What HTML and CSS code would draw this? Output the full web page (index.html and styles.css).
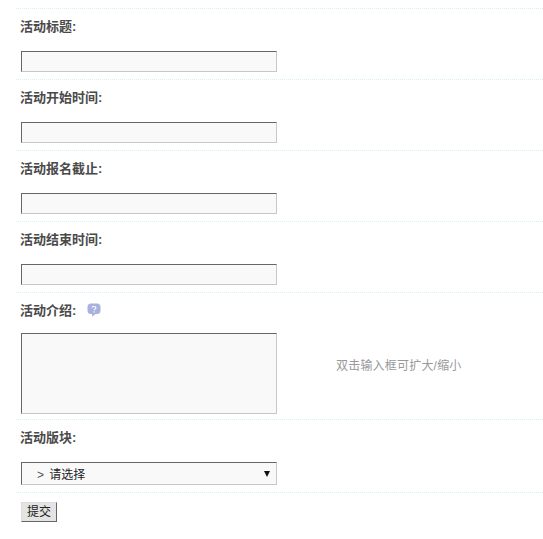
FILE: index.html
```html
<!DOCTYPE html>
<html lang="zh-CN">
<head>
<meta charset="utf-8">
<title>活动</title>
<link rel="stylesheet" href="styles.css">
</head>
<body>
<form class="form">
  <div class="row">
    <label class="label">活动标题:</label>
    <input class="field" type="text">
  </div>
  <div class="row">
    <label class="label">活动开始时间:</label>
    <input class="field" type="text">
  </div>
  <div class="row">
    <label class="label">活动报名截止:</label>
    <input class="field" type="text">
  </div>
  <div class="row">
    <label class="label">活动结束时间:</label>
    <input class="field" type="text">
  </div>
  <div class="row row-area">
    <label class="label">活动介绍:
      <svg class="help" width="14" height="14" viewBox="0 0 14 14" aria-hidden="true">
        <path d="M4 0.5h6a3.5 3.5 0 0 1 3.5 3.5v3.5a3.5 3.5 0 0 1-3.5 3.5H8.5L5.5 13.5 4.8 11H4A3.5 3.5 0 0 1 .5 7.5V4A3.5 3.5 0 0 1 4 .5z" fill="#a9b1df"/>
        <path d="M5 4.3c.3-1 3.8-1.2 3.9.6 0 1.2-1.7 1.2-1.8 2.4" fill="none" stroke="#fff" stroke-width="1.1"/>
        <rect x="6.5" y="8.3" width="1.2" height="1.2" fill="#fff"/>
      </svg>
    </label>
    <div class="area-line">
      <textarea class="field area"></textarea>
      <span class="hint">双击输入框可扩大/缩小</span>
    </div>
  </div>
  <div class="row row-select">
    <label class="label">活动版块:</label>
    <div class="select">
      <span class="select-text"><span class="gt">&gt;</span> 请选择</span>
      <span class="arrow"></span>
    </div>
  </div>
  <div class="row row-submit">
    <button class="submit" type="button">提交</button>
  </div>
</form>
</body>
</html>
```
FILE: styles.css
```css
* { box-sizing: border-box; }
html, body { margin: 0; padding: 0; background: #fff; }
body {
  font-family: "Liberation Sans", "Noto Sans CJK SC", sans-serif;
  font-size: 12px;
  color: #444;
}
.form { padding: 8px 0 0 16px; }
.row {
  border-top: 1px dotted #d8eff9;
  padding: 0 0 7px 5px;
  height: 71px;
}
.label {
  display: flex;
  align-items: center;
  height: 17px;
  margin-top: 9px;
  margin-bottom: 16px;
  margin-left: -1px;
  font-weight: bold;
  font-size: 13px;
  line-height: 17px;
  color: #4a4a4a;
}
.help { margin-left: 11px; margin-top: -2px; }
.field {
  display: block;
  width: 256px;
  height: 21px;
  margin: 0;
  padding: 0 2px;
  background: #f9f9f9;
  border-style: solid;
  border-width: 1px;
  border-color: #666 #c8c8c8 #c8c8c8 #666;
  border-radius: 0;
  outline: 0;
}
.row-area { height: 127px; }
.row-area .label { margin-bottom: 14px; }
.area-line { display: flex; align-items: center; }
.area { height: 81px; resize: none; }
.hint {
  margin-left: 59px;
  color: #999;
  font-size: 12px;
  letter-spacing: 0.2px;
  position: relative;
  top: -9px;
}
.row-select { height: 73px; }
.row-select .label { margin-bottom: 16px; }
.select {
  display: flex;
  align-items: center;
  justify-content: space-between;
  width: 256px;
  height: 23px;
  padding: 0 6px 0 15px;
  background: #f9f9f9;
  border-style: solid;
  border-width: 1px;
  border-color: #666 #c8c8c8 #c8c8c8 #666;
  font-size: 12px;
  color: #222;
}
.gt { color: #555; margin-right: 2px; }
.arrow {
  width: 0;
  height: 0;
  border-left: 3.5px solid transparent;
  border-right: 3.5px solid transparent;
  border-top: 6px solid #111;
}
.row-submit { height: 40px; padding-top: 9px; }
.submit {
  display: block;
  width: 36px;
  height: 20px;
  padding: 0;
  background: #e4e4e4;
  border-style: solid;
  border-width: 1px;
  border-color: #ddd #666 #666 #ddd;
  border-radius: 0;
  font-family: inherit;
  font-size: 12px;
  line-height: 18px;
  color: #222;
}
```
